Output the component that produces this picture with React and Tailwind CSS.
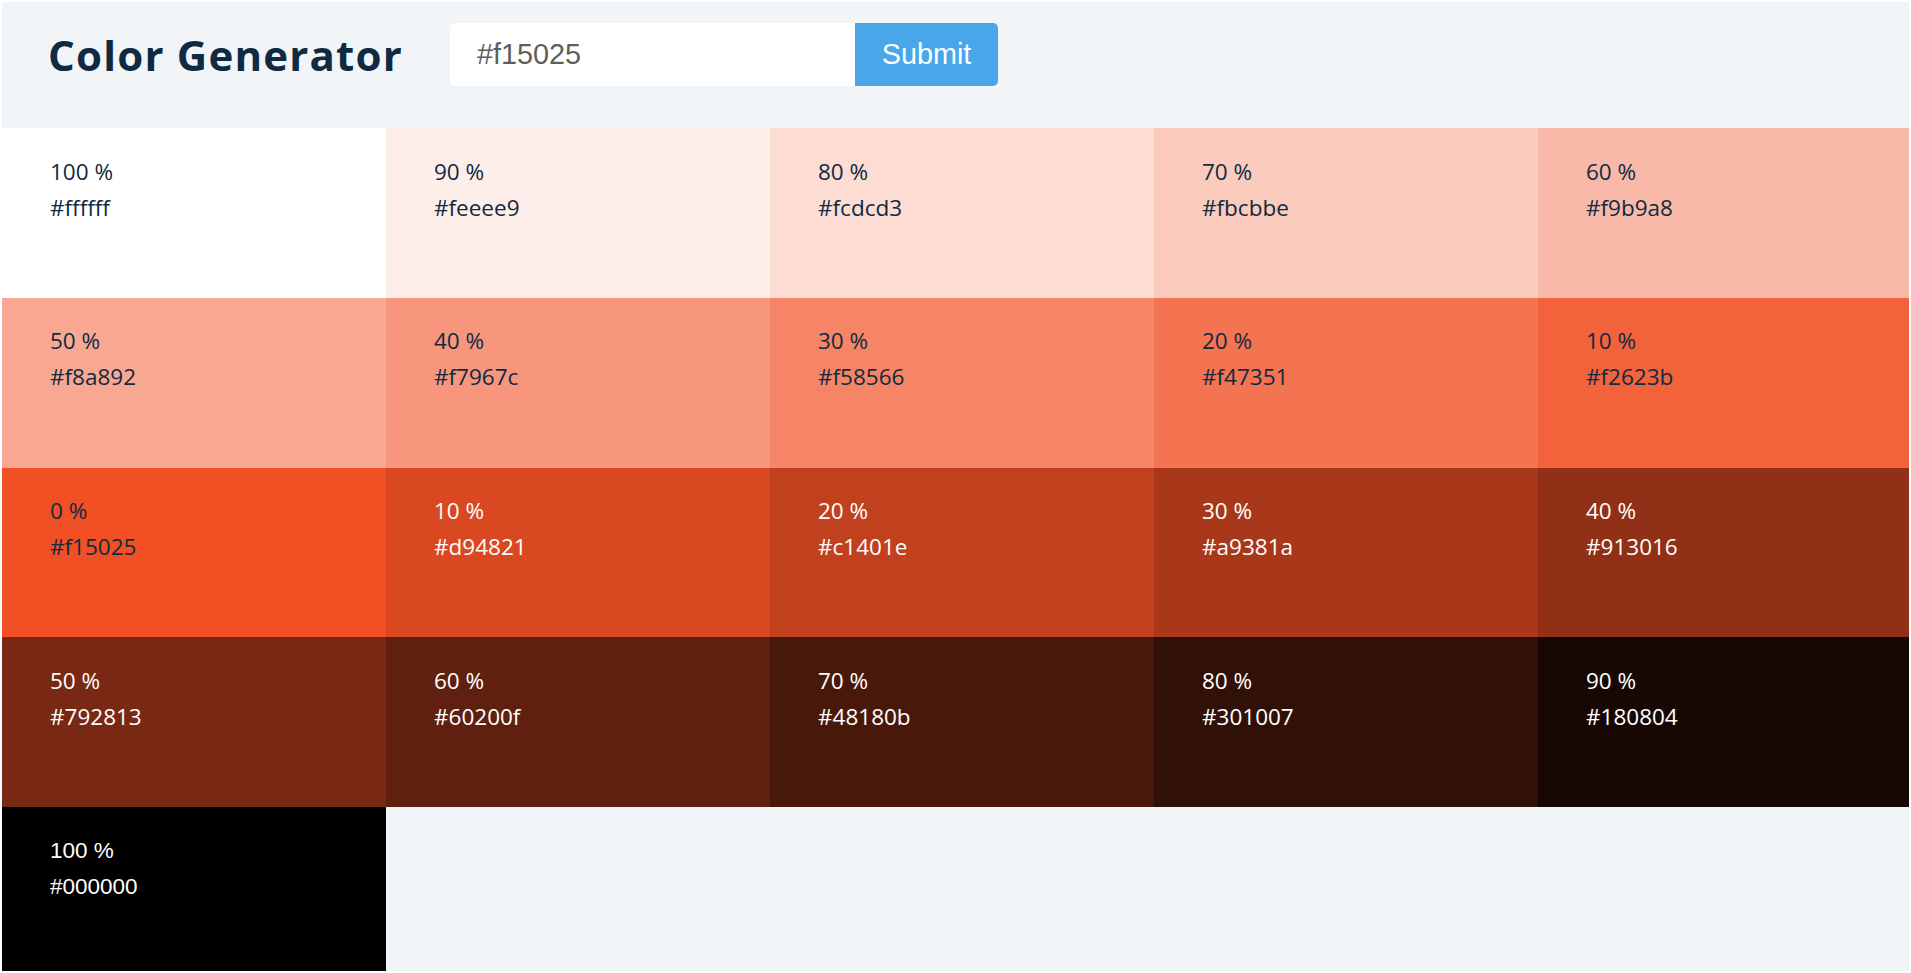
import { useState } from 'react'

const BASE = '#f15025'

function hexToRgb(hex) {
  let h = hex.replace('#', '').trim()
  if (h.length === 3) h = h.split('').map((c) => c + c).join('')
  if (!/^[0-9a-fA-F]{6}$/.test(h)) return null
  return [0, 2, 4].map((i) => parseInt(h.slice(i, i + 2), 16))
}

function toHex(rgb) {
  return '#' + rgb.map((v) => Math.round(v).toString(16).padStart(2, '0')).join('')
}

// tints toward white, then the base, then shades toward black (10% steps)
function buildList(hex) {
  const rgb = hexToRgb(hex)
  if (!rgb) return null
  const list = []
  for (let w = 100; w > 0; w -= 10) {
    list.push({ weight: w, type: 'tint', hex: toHex(rgb.map((c) => c + (255 - c) * (w / 100))) })
  }
  list.push({ weight: 0, type: 'base', hex: toHex(rgb) })
  for (let w = 10; w <= 100; w += 10) {
    list.push({ weight: w, type: 'shade', hex: toHex(rgb.map((c) => c * (1 - w / 100))) })
  }
  return list
}

function ColorTile({ color, index }) {
  const dark = index > 10
  const last = color.type === 'shade' && color.weight === 100
  return (
    <article
      className={`h-[169.75px] px-12 pt-[25.5px] text-[22.5px] leading-[36px] ${
        dark ? 'text-white' : 'text-[#102a42]'
      }`}
      style={{
        backgroundColor: color.hex,
        fontFamily: last ? '"Liberation Sans", Arial, sans-serif' : '"Open Sans", "Noto Sans", sans-serif',
      }}
    >
      <p>{color.weight} %</p>
      <p>{color.hex}</p>
    </article>
  )
}

export default function App() {
  const [value, setValue] = useState(BASE)
  const [colors, setColors] = useState(() => buildList(BASE))
  const [error, setError] = useState(false)

  function handleSubmit(e) {
    e.preventDefault()
    const next = buildList(value)
    if (!next) {
      setError(true)
      return
    }
    setError(false)
    setColors(next)
  }

  return (
    <div className="h-[973px] w-full overflow-hidden border-2 border-white bg-[#f1f5f8]">
      <section className="flex h-[126px] items-start pl-[46px] pt-[21px]">
        <div className="flex h-[63px] w-[402px] shrink-0 items-center">
          <h3
            className="text-[42px] font-bold leading-none tracking-[1.2px] text-[#102a42]"
            style={{ fontFamily: '"Open Sans", "Noto Sans", sans-serif' }}
          >
            Color Generator
          </h3>
        </div>
        <form
          onSubmit={handleSubmit}
          className="flex h-[63px]"
          style={{ fontFamily: '"Liberation Sans", Arial, sans-serif' }}
        >
          <input
            type="text"
            value={value}
            onChange={(e) => setValue(e.target.value)}
            placeholder={BASE}
            className={`h-full w-[405px] rounded-l-[5px] bg-white pl-[27px] text-[28.8px] text-[#5f5f5f] outline-none ${
              error ? 'border-2 border-red-500' : ''
            }`}
          />
          <button
            type="submit"
            className="h-full w-[143px] rounded-r-[5px] bg-[#49a6e9] text-[28.8px] text-white"
          >
            Submit
          </button>
        </form>
      </section>

      <section className="grid grid-cols-[repeat(5,384px)]">
        {colors.map((c, i) => (
          <ColorTile key={i} color={c} index={i} />
        ))}
      </section>
    </div>
  )
}
